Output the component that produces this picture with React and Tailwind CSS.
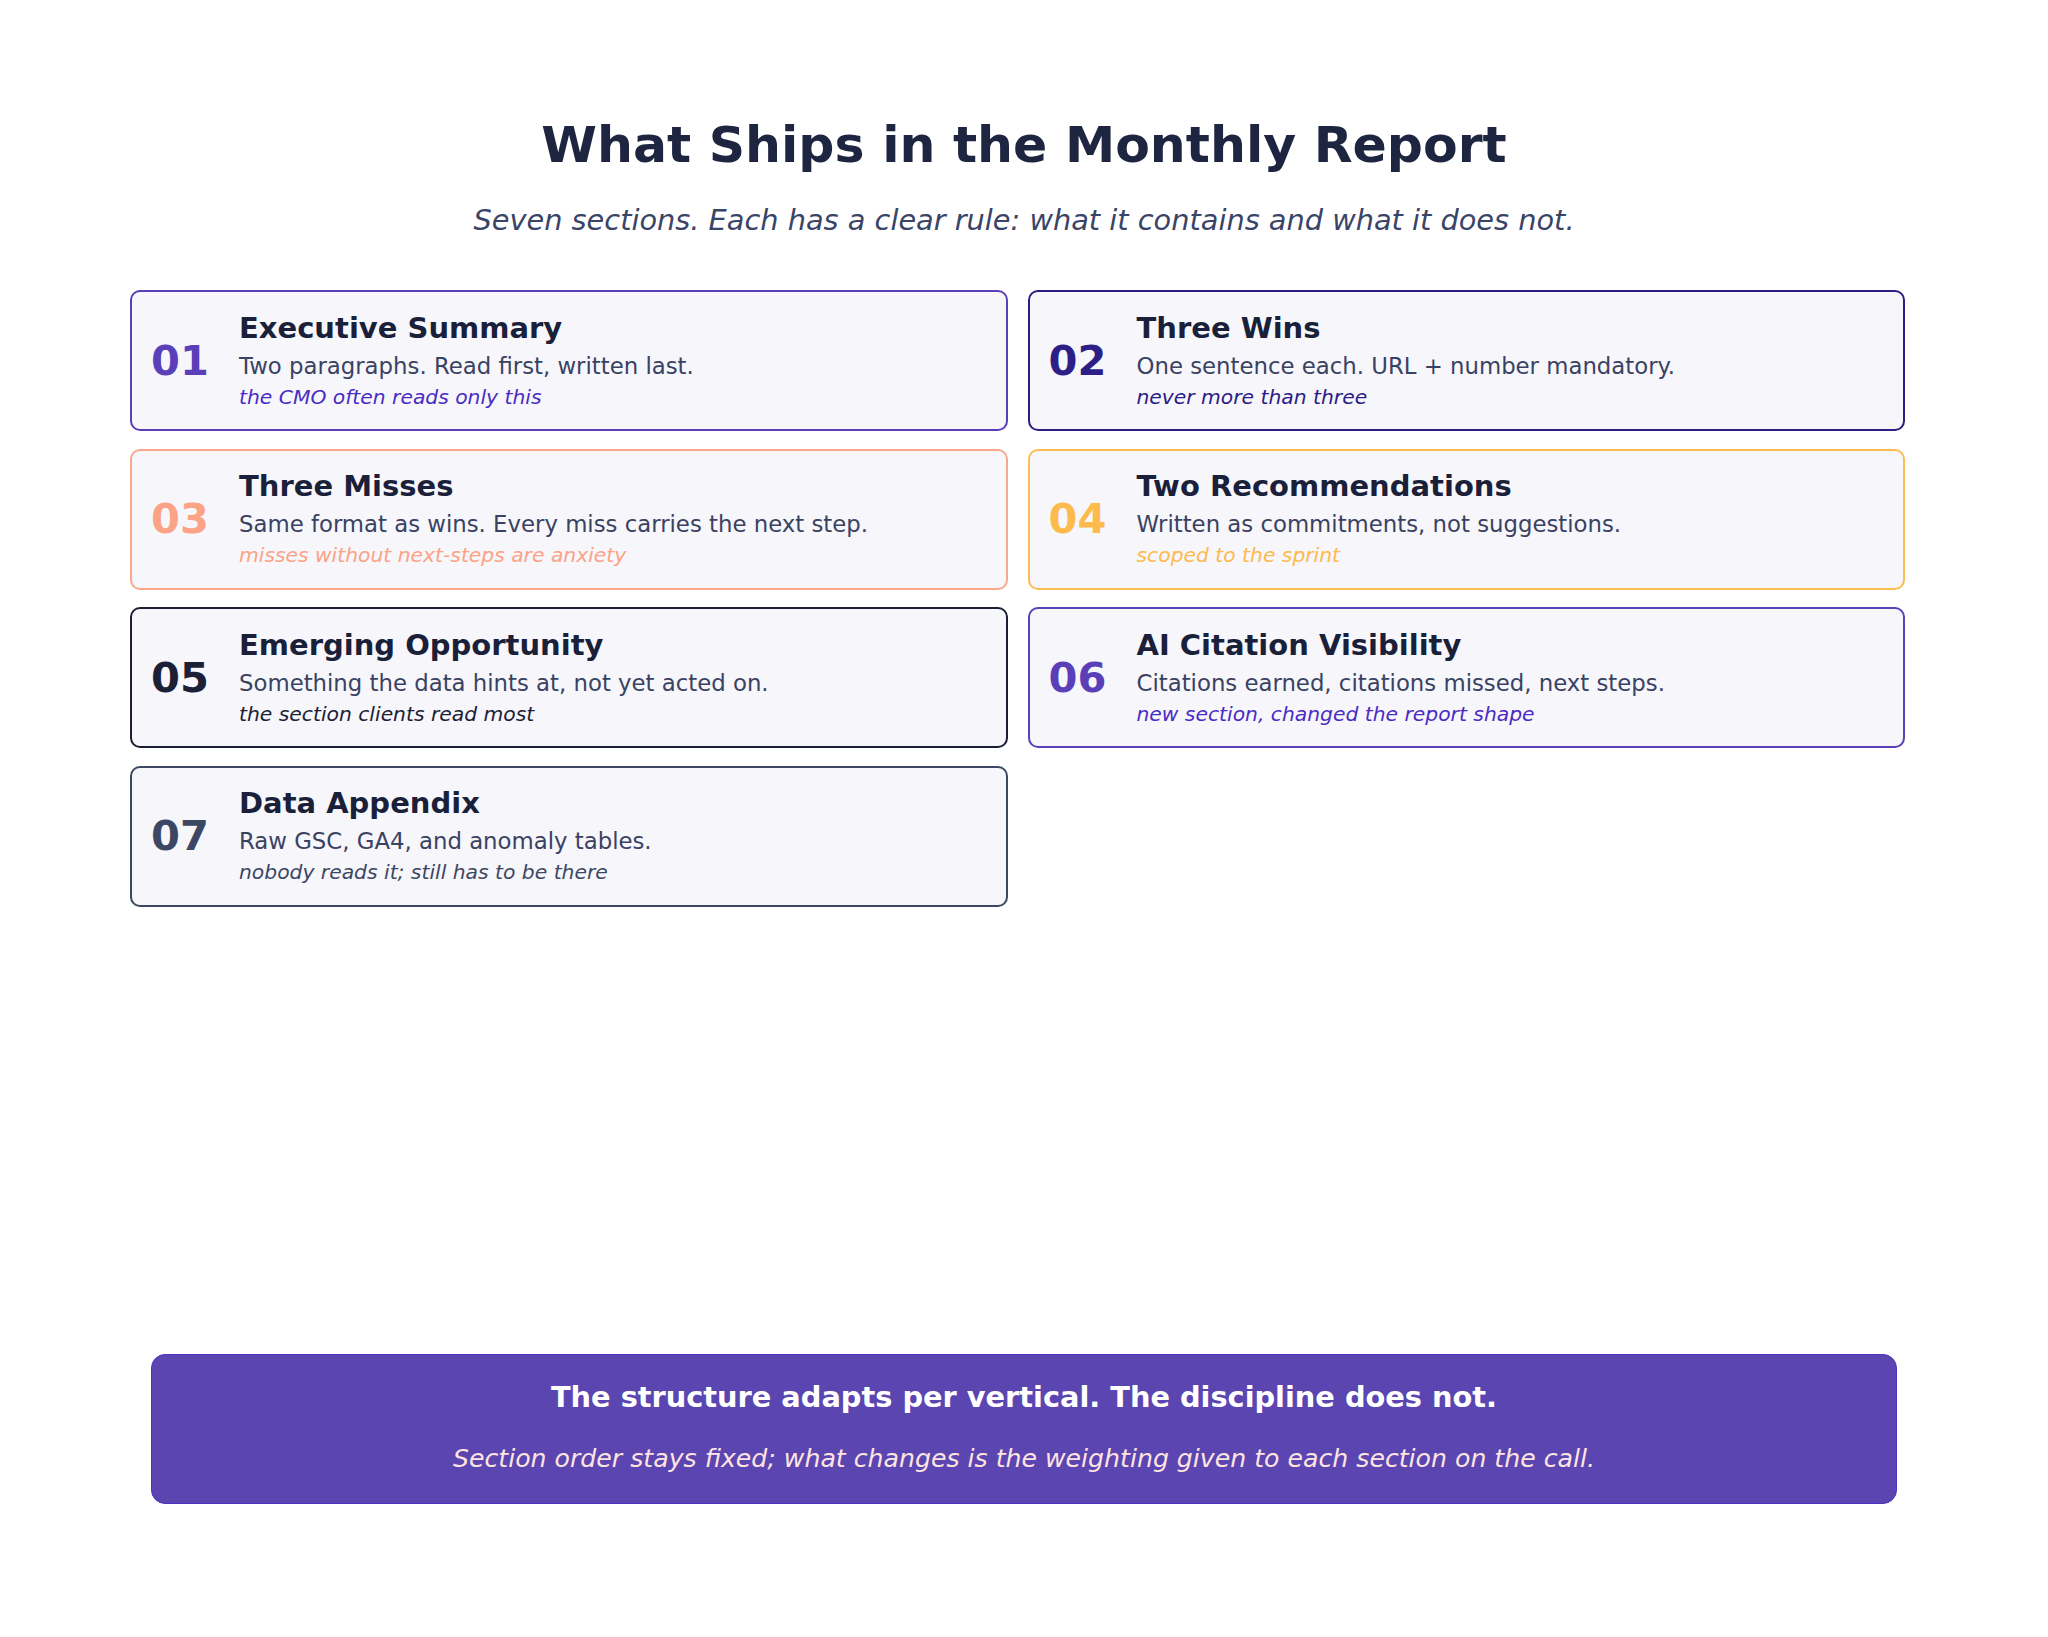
import React from 'react';

const sections = [
    {
        num: '01',
        title: 'Executive Summary',
        desc: 'Two paragraphs. Read first, written last.',
        note: 'the CMO often reads only this',
        border: 'border-[#5a3fb8]',
        numColor: 'text-[#5a3fb8]',
        noteColor: 'text-[#4a2cc4]',
    },
    {
        num: '02',
        title: 'Three Wins',
        desc: 'One sentence each. URL + number mandatory.',
        note: 'never more than three',
        border: 'border-[#2b1e80]',
        numColor: 'text-[#2d1f86]',
        noteColor: 'text-[#2a1c86]',
    },
    {
        num: '03',
        title: 'Three Misses',
        desc: 'Same format as wins. Every miss carries the next step.',
        note: 'misses without next-steps are anxiety',
        border: 'border-[#fba78c]',
        numColor: 'text-[#fca386]',
        noteColor: 'text-[#fca386]',
    },
    {
        num: '04',
        title: 'Two Recommendations',
        desc: 'Written as commitments, not suggestions.',
        note: 'scoped to the sprint',
        border: 'border-[#fdbd52]',
        numColor: 'text-[#fdba4d]',
        noteColor: 'text-[#fdba4d]',
    },
    {
        num: '05',
        title: 'Emerging Opportunity',
        desc: 'Something the data hints at, not yet acted on.',
        note: 'the section clients read most',
        border: 'border-[#1b1f33]',
        numColor: 'text-[#1c2036]',
        noteColor: 'text-[#1c2036]',
    },
    {
        num: '06',
        title: 'AI Citation Visibility',
        desc: 'Citations earned, citations missed, next steps.',
        note: 'new section, changed the report shape',
        border: 'border-[#5a3fb8]',
        numColor: 'text-[#5a3fb8]',
        noteColor: 'text-[#4a2cc4]',
    },
    {
        num: '07',
        title: 'Data Appendix',
        desc: 'Raw GSC, GA4, and anomaly tables.',
        note: 'nobody reads it; still has to be there',
        border: 'border-[#3c4764]',
        numColor: 'text-[#3c4764]',
        noteColor: 'text-[#3c4764]',
    },
];

const SectionCard = ({ s }) => (
    <div className={`h-[141px] rounded-[10px] border-[2.5px] ${s.border} bg-[#f6f6fb] pl-[19px] pr-6 flex items-center`}>
        <div className={`w-[88px] shrink-0 text-[41.6px] leading-none font-bold ${s.numColor}`}>
            {s.num}
        </div>
        <div className="flex flex-col">
            <h3 className="text-[29px] leading-[36px] font-bold text-[#1a1f3a]">{s.title}</h3>
            <p className="mt-[3px] text-[22.8px] leading-[35px] text-[#3a4262]">{s.desc}</p>
            <p className={`-mt-[2px] text-[20.3px] leading-[30px] italic ${s.noteColor}`}>{s.note}</p>
        </div>
    </div>
);

const App = () => {
    return (
        <div className="min-h-[1637px] bg-white font-['DejaVu_Sans',sans-serif] pt-[115px]">
            <div className="text-center">
                <h1 className="text-[50.5px] leading-[60px] font-bold text-[#1e2540]">
                    What Ships in the Monthly Report
                </h1>
                <p className="mt-[27px] text-[28.8px] leading-[37px] italic text-[#3a4466]">
                    Seven sections. Each has a clear rule: what it contains and what it does not.
                </p>
            </div>

            <div className="ml-[130px] mt-[51px] w-[1775px] grid grid-cols-2 gap-x-[20px] gap-y-[17.5px]">
                {sections.map((s) => (
                    <SectionCard key={s.num} s={s} />
                ))}
            </div>

            <div className="mx-auto mt-[447px] w-[1746px] h-[150px] rounded-[14px] border border-[#4d33c2] bg-[#5b45b1] pt-[24px] text-center">
                <p className="text-[28.8px] leading-[36px] font-bold text-white">
                    The structure adapts per vertical. The discipline does not.
                </p>
                <p className="mt-[28px] text-[25.2px] leading-[32px] italic text-[#fde4e1]">
                    Section order stays fixed; what changes is the weighting given to each section on the call.
                </p>
            </div>
        </div>
    );
};

export default App;
